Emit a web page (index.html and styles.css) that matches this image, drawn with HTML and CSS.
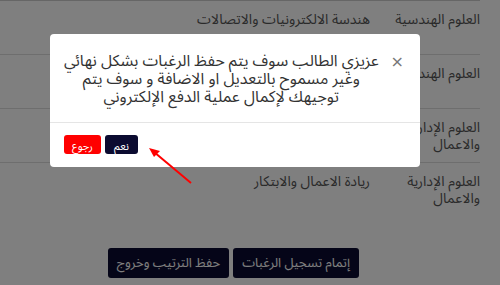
FILE: index.html
```html
<!DOCTYPE html>
<html lang="ar" dir="rtl">
<head>
<meta charset="utf-8">
<link rel="stylesheet" href="styles.css">
</head>
<body>
<div class="page">
  <table class="choices">
    <colgroup><col class="k1"><col class="k2"><col></colgroup>
    <tbody>
      <tr><td>العلوم الهندسية</td><td>هندسة الالكترونيات والاتصالات</td><td></td></tr>
      <tr><td>العلوم الهندسية</td><td>هندسة الحاسبات</td><td></td></tr>
      <tr><td>العلوم الإدارية والاعمال</td><td>إدارة الاعمال</td><td></td></tr>
      <tr class="last"><td>العلوم الإدارية والاعمال</td><td>ريادة الاعمال والابتكار</td><td></td></tr>
    </tbody>
  </table>
  <div class="actions">
    <button class="btn-dark">إتمام تسجيل الرغبات</button>
    <button class="btn-dark">حفظ الترتيب وخروج</button>
  </div>
</div>
<div class="overlay"></div>
<div class="modal">
  <div class="modal-body">
    <span class="close">×</span>
    <p class="msg">عزيزي الطالب سوف يتم حفظ الرغبات بشكل نهائي<br>وغير مسموح بالتعديل او الاضافة و سوف يتم<br>توجيهك لإكمال عملية الدفع الإلكتروني</p>
  </div>
  <div class="modal-footer">
    <button class="btn-yes">نعم</button>
    <button class="btn-back">رجوع</button>
  </div>
</div>
<svg class="arrow" width="60" height="50" viewBox="0 0 60 50">
  <line x1="5" y1="5" x2="42" y2="36" stroke="#ff0000" stroke-width="2"/>
  <polygon points="0,1 11,4 5,10" fill="#ff0000"/>
</svg>
</body>
</html>
```
FILE: styles.css
```css
* { box-sizing: border-box; }
html, body { margin: 0; padding: 0; }
body {
  width: 500px;
  height: 285px;
  overflow: hidden;
  background: #fff;
  font-family: "Noto Sans Arabic", "Noto Sans", "DejaVu Sans", sans-serif;
  color: #555;
}
.page { padding: 0 20px 0 0; }
.choices {
  border-collapse: collapse;
  table-layout: fixed;
  width: 480px;
  border-top: 1px solid #ccc;
}
.choices col.k1 { width: 110px; }
.choices col.k2 { width: 190px; }
.choices td {
  font-size: 14px;
  line-height: 17px;
  vertical-align: top;
  padding: 10px 0 0 10px;
  height: 54px;
  text-align: right;
}
.choices tr { border-bottom: 1px solid #ddd; }
.choices tr.last { border-bottom: none; }
.actions {
  display: flex;
  gap: 4px;
  padding-right: 121px;
  margin-top: 31px;
}
.btn-dark {
  background: #0b0b30;
  color: #fff;
  border: none;
  border-radius: 3px;
  font-family: inherit;
  font-size: 13px;
  height: 30px;
  padding: 0 9px;
}
.overlay {
  position: fixed;
  inset: 0;
  background: rgba(0,0,0,0.5);
}
.modal {
  position: fixed;
  top: 34px;
  left: 50px;
  width: 370px;
  height: 133px;
  background: #fff;
  border-radius: 4px;
}
.modal-body {
  display: flex;
  align-items: flex-start;
  padding: 18px 16px 0 4px;
  height: 89px;
  border-bottom: 1px solid #e5e5e5;
}
.close {
  color: #777;
  font-size: 16px;
  line-height: 18px;
  margin-top: 1px;
  margin-left: 2px;
  font-family: "DejaVu Sans", sans-serif;
}
.msg {
  margin: 0;
  flex: 1;
  text-align: center;
  font-size: 15.9px;
  line-height: 18px;
  color: #333;
  white-space: nowrap;
}
.modal-footer {
  display: flex;
  justify-content: flex-end;
  gap: 4px;
  padding: 12px 14px;
}
.modal-footer button {
  border: none;
  border-radius: 3px;
  color: #fff;
  font-family: inherit;
  font-size: 11px;
  height: 19px;
  padding: 0 6px;
}
.btn-yes { background: #0b0b30; width: 33px; }
.btn-back { background: #ff0000; width: 37px; }
.arrow {
  position: fixed;
  left: 149px;
  top: 147px;
}
```
